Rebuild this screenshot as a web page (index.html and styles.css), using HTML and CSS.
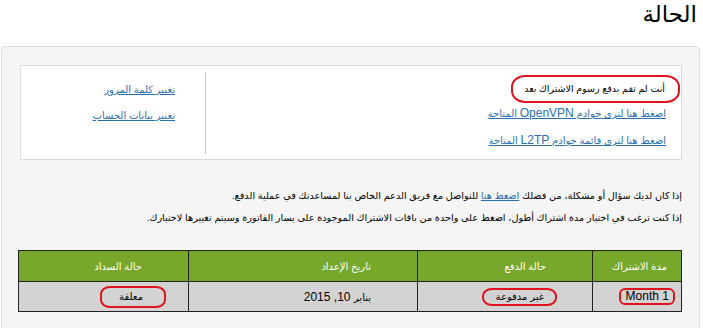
FILE: index.html
```html
<!doctype html>
<html lang="ar" dir="rtl">
  <head>
    <meta charset="UTF-8" />
    <meta name="viewport" content="width=device-width, initial-scale=1.0" />
    <title>الحالة</title>
    <link rel="stylesheet" href="styles.css">
  </head>
  <body>
    <h1 class="page-title">الحالة</h1>

    <div class="panel">
      <div class="summary">
        <div class="summary-main">
          <p class="notice">
            <span class="mark mark-notice">أنت لم تقم بدفع رسوم الاشتراك بعد</span>
          </p>
          <p class="summary-link"><a href="#">اضغط هنا لترى خوادم <span class="latin">OpenVPN</span> المتاحة</a></p>
          <p class="summary-link"><a href="#">اضغط هنا لترى قائمة خوادم <span class="latin">L2TP</span> المتاحة</a></p>
        </div>
        <div class="summary-side">
          <p class="side-link"><a href="#">تغيير كلمة المرور</a></p>
          <p class="side-link"><a href="#">تغيير بيانات الحساب</a></p>
        </div>
      </div>

      <p class="help">
        إذا كان لديك سؤال أو مشكلة، من فضلك <a href="#">اضغط هنا</a> للتواصل مع فريق الدعم الخاص بنا لمساعدتك في عملية الدفع.
      </p>
      <p class="help">
        إذا كنت ترغب في اختيار مدة اشتراك أطول، اضغط على واحدة من باقات الاشتراك الموجودة على يسار الفاتورة وسيتم تغييرها لاختيارك.
      </p>

      <table class="invoice">
        <thead>
          <tr>
            <th class="col-period">مدة الاشتراك</th>
            <th class="col-payment">حالة الدفع</th>
            <th class="col-date">تاريخ الإعداد</th>
            <th class="col-status">حالة السداد</th>
          </tr>
        </thead>
        <tbody>
          <tr>
            <td class="col-period"><span class="mark mark-period">1 Month</span></td>
            <td class="col-payment"><span class="mark mark-payment">غير مدفوعة</span></td>
            <td class="col-date"><span class="ar">يناير</span> 10, 2015</td>
            <td class="col-status"><span class="mark mark-status">معلقة</span></td>
          </tr>
        </tbody>
      </table>
    </div>
  </body>
</html>
```

FILE: styles.css
```css
* {
  margin: 0;
  padding: 0;
  box-sizing: border-box;
}

body {
  font-family: "Liberation Sans", "DejaVu Sans", sans-serif;
  font-size: 10px;
  color: #000000;
  background: #ffffff;
  height: 328px;
  overflow: hidden;
}

a {
  color: #2a6fb0;
  text-decoration: underline;
}

.latin {
  font-size: 12px;
}

.page-title {
  font-size: 23px;
  font-weight: normal;
  line-height: 28px;
  height: 46px;
  padding: 0 6px 0 0;
}

.panel {
  margin: 0 3px 0 1px;
  padding: 18px 17px 0 18px;
  background: #f5f5f5;
  border: 1px solid #dddddd;
  border-radius: 4px;
  height: 300px;
}

/* top box with notice and account links */
.summary {
  display: grid;
  grid-template-columns: 475px 1fr;
  background: #ffffff;
  border: 1px solid #dddddd;
  height: 95px;
  padding: 6px 0;
}

.summary-main {
  padding: 3px 15px 0 0;
}

.notice {
  height: 25px;
}

.summary-link {
  line-height: 26px;
}

.summary-side {
  border-right: 1px solid #c8c8c8;
  padding: 5px 30px 0 0;
}

.side-link {
  line-height: 26px;
}

/* hand drawn red marks */
.mark {
  display: inline-block;
  vertical-align: middle;
  border: 2px solid #e0141e;
  border-radius: 10px / 8px;
  line-height: 14px;
}

.mark-notice {
  font-size: 9.5px;
  line-height: 18px;
  padding: 3px 13px 3px 11px;
  margin-right: -14px;
  border-radius: 14px / 12px;
}

.mark-period {
  font-size: 12px;
  line-height: 13px;
  padding: 0 4px 0 5px;
  border-radius: 6px;
}

.mark-payment {
  padding: 0 11px 0 12px;
  font-size: 10px;
}

.mark-status {
  padding: 2px 21px 2px 17px;
  font-size: 10px;
}

.help {
  font-size: 9.7px;
  line-height: 22px;
  white-space: nowrap;
}

.summary + .help {
  margin-top: 25px;
}

/* invoice table */
.invoice {
  width: 663px;
  margin-top: 21px;
  border-collapse: collapse;
  table-layout: fixed;
}

.invoice th,
.invoice td {
  border: 1px solid #222222;
  text-align: right;
  padding-right: 46px;
  font-weight: normal;
}

.invoice th {
  background: #77a82b;
  color: #ffffff;
  height: 31px;
}

.invoice td {
  background: #d3d3d3;
  height: 30px;
  font-size: 12px;
}

.invoice .ar {
  font-size: 10px;
}

.invoice .col-period {
  width: 89px;
  padding-right: 14px;
}

.invoice .col-payment {
  width: 175px;
}

.invoice .col-date {
  width: 229px;
}

.invoice .col-status {
  width: 170px;
}

.invoice td.col-period {
  padding-right: 6px;
}

.invoice td.col-payment {
  padding-right: 35px;
}

.invoice td.col-status {
  padding-right: 22px;
}
```
